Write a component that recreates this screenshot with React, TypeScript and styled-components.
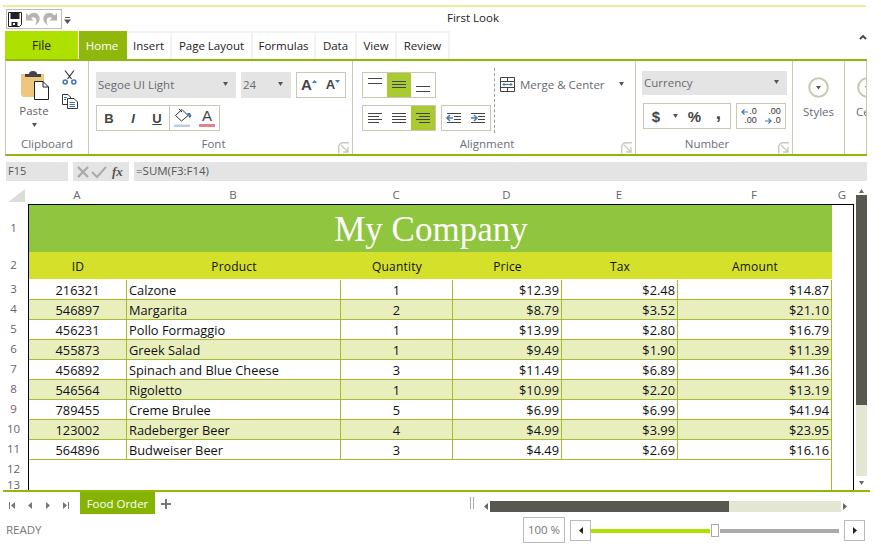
import React from "react";
import styled, { createGlobalStyle } from "styled-components";

const GlobalStyle = createGlobalStyle`
  html, body {
    margin: 0;
    padding: 0;
    background: #ffffff;
  }
  * {
    box-sizing: border-box;
  }
`;

const UI_FONT = `"Open Sans", "Noto Sans", sans-serif`;
const LINE = "#c8c8b4";
const COLS = "98px 214px 112px 109px 116px 154px";

const Frame = styled.div`
  width: 881px;
  height: 551px;
  overflow: hidden;
  padding-top: 5px;
  background: #fff;
  font-family: ${UI_FONT};
  font-size: 12px;
  color: #333;
`;

const TopLine = styled.div`
  height: 2px;
  width: 863px;
  margin-left: 3px;
  background: #e4f09a;
`;

const TitleRow = styled.div`
  height: 24px;
  display: flex;
  align-items: flex-start;
  padding: 2px 0 0 6px;
`;

const Qat = styled.div`
  width: 56px;
  height: 20px;
  border: 1px solid #bbb;
  display: flex;
  align-items: center;
  gap: 3px;
  padding-left: 1px;
`;

const QatMore = styled.svg`
  width: 7px;
  height: 7px;
  margin: 8px 0 0 2px;
`;

const Title = styled.div`
  flex: 1;
  text-align: center;
  padding: 1px 0 0 7px;
  margin-right: 13px;
  font-size: 11.5px;
  color: #222;
`;

const TabRow = styled.div`
  height: 28px;
  margin-left: 5px;
  width: 862px;
  display: flex;
  align-items: stretch;
`;

const FileTab = styled.div`
  width: 73px;
  margin-right: 1px;
  padding-top: 1px;
  background: #aee000;
  display: flex;
  align-items: center;
  justify-content: center;
  color: #222;
`;

const Tab = styled.div<{ $w: number; $active?: boolean }>`
  width: ${(p) => p.$w}px;
  display: flex;
  align-items: center;
  justify-content: center;
  padding-bottom: 1px;
  background: ${(p) => (p.$active ? "#90b80c" : "#fff")};
  color: ${(p) => (p.$active ? "#fff" : "#222")};
  border-right: 2px solid ${(p) => (p.$active ? "#90b80c" : "#f2f2f2")};
  border-top: 2px solid ${(p) => (p.$active ? "#90b80c" : "#f2f2f2")};
  font-size: 11.5px;
`;

const Collapse = styled.svg`
  width: 8px;
  height: 6px;
  margin: 3px 0 0 auto;
`;

const Ribbon = styled.div`
  height: 97px;
  width: 862px;
  margin-left: 5px;
  display: flex;
  border-top: 2px solid #90b80c;
  border-bottom: 2px solid #90b80c;
  border-left: 1px solid ${LINE};
`;

const Group = styled.div<{ $w: number }>`
  width: ${(p) => p.$w}px;
  flex: none;
  overflow: hidden;
  display: flex;
  flex-direction: column;
  border-right: 1px solid ${LINE};
`;

const GroupBody = styled.div<{ $pl?: number; $pt?: number }>`
  flex: 1;
  display: flex;
  padding: ${(p) => p.$pt ?? 11}px 0 0 ${(p) => p.$pl ?? 0}px;
`;

const GroupFooter = styled.div<{ $launcher?: boolean }>`
  position: relative;
  height: 21px;
  display: flex;
  align-items: flex-start;
  justify-content: center;
  padding-top: 3px;
  padding-right: ${(p) => (p.$launcher ? 14 : 0)}px;
  color: #6a6f73;
  font-size: 11.5px;
`;

const Launcher = styled.svg`
  position: absolute;
  right: 2px;
  bottom: 0;
  width: 12px;
  height: 12px;
`;

const PasteCol = styled.div`
  width: 56px;
  display: flex;
  flex-direction: column;
  align-items: center;
  color: #555;
`;

const PasteSvg = styled.svg`
  width: 30px;
  height: 30px;
  margin-left: 2px;
`;

const PasteLabel = styled.div`
  margin-top: 3px;
  font-size: 11.5px;
  color: #666;
`;

const SmallArrow = styled.svg`
  width: 5px;
  height: 4px;
  flex: none;
`;

const PasteArrow = styled(SmallArrow)`
  margin-top: 5px;
`;

const ClipSide = styled.div`
  display: flex;
  flex-direction: column;
  gap: 9px;
`;

const Column = styled.div<{ $gap?: number }>`
  display: flex;
  flex-direction: column;
  gap: ${(p) => p.$gap ?? 7}px;
`;

const Row = styled.div<{ $pl?: number }>`
  display: flex;
  gap: 5px;
  padding-left: ${(p) => p.$pl ?? 0}px;
`;

const Combo = styled.div<{ $w: number; $h?: number }>`
  width: ${(p) => p.$w}px;
  height: ${(p) => p.$h ?? 26}px;
  background: #e4e4e4;
  display: flex;
  align-items: center;
  justify-content: space-between;
  padding: 0 8px 2px 2px;
  color: #666b70;
  font-size: 11.5px;
`;

const ButtonBox = styled.div`
  height: 26px;
  border: 1px solid ${LINE};
  display: flex;
  flex: none;
`;

const Cell24 = styled.div<{ $active?: boolean; $w?: number }>`
  width: ${(p) => p.$w ?? 24}px;
  height: 24px;
  background: ${(p) => (p.$active ? "#a9cb2f" : "transparent")};
  display: flex;
  align-items: center;
  justify-content: center;
`;

const Letter = styled.span<{ $italic?: boolean; $under?: boolean }>`
  font-family: "Liberation Sans", sans-serif;
  font-weight: 700;
  font-size: 13px;
  color: #444;
  font-style: ${(p) => (p.$italic ? "italic" : "normal")};
  text-decoration: ${(p) => (p.$under ? "underline" : "none")};
`;

const JoinedBoxes = styled.div`
  display: flex;
  & > div + div {
    margin-left: -1px;
  }
`;

const DashedRule = styled.div`
  width: 0;
  height: 65px;
  margin: -4px 5px 0 3px;
  border-left: 1px dashed #999;
`;

const MergeButton = styled.div`
  display: flex;
  align-items: center;
  height: 20px;
  margin-top: 2px;
  gap: 5px;
  color: #666b70;
  white-space: nowrap;
  font-size: 11.5px;
`;

const MergeArrow = styled(SmallArrow)`
  margin-left: 9px;
`;

const BigDropdown = styled.div<{ $start?: boolean }>`
  display: flex;
  flex-direction: column;
  align-items: ${(p) => (p.$start ? "flex-start" : "center")};
  width: 100%;
  gap: 6px;
  color: #666b70;
  white-space: nowrap;
  font-size: 11.5px;
`;

const CircleIcon = styled.svg`
  width: 21px;
  height: 21px;
  flex: none;
`;

const CircleClip = styled(CircleIcon)`
  margin-left: 1px;
`;

const FormulaBar = styled.div`
  height: 19px;
  margin: 6px 0 0 6px;
  width: 861px;
  display: flex;
  gap: 5px;
`;

const NameBox = styled.div`
  width: 62px;
  background: #e4e4e4;
  padding-left: 2px;
  line-height: 17px;
  font-size: 11px;
  color: #555;
`;

const FormulaTools = styled.div`
  width: 56px;
  background: #e4e4e4;
  display: flex;
  align-items: center;
  padding-left: 3px;
  gap: 1px;
`;

const Fx = styled.span`
  font-family: "Liberation Serif", serif;
  font-style: italic;
  font-weight: 700;
  font-size: 13px;
  color: #555;
  margin-left: 4px;
`;

const FormulaInput = styled.div`
  flex: 1;
  background: #e4e4e4;
  padding-left: 2px;
  line-height: 17px;
  font-size: 11.5px;
  color: #555;
`;

const ColumnHeaders = styled.div`
  height: 18px;
  margin-top: 5px;
  display: flex;
  padding-left: 8px;
  color: #666;
  font-size: 11.5px;
`;

const CornerMark = styled.svg`
  width: 17px;
  height: 13px;
  margin: 3px 3px 0 0;
  flex: none;
`;

const ColLetters = styled.div`
  display: grid;
  grid-template-columns: ${COLS} 22px;
`;

const ColLetter = styled.div`
  text-align: center;
  line-height: 17px;
`;

const SheetArea = styled.div`
  height: 286px;
  display: flex;
`;

const RowNumbers = styled.div`
  width: 28px;
  flex: none;
  overflow: hidden;
  color: #6b5f6b;
  font-size: 11.5px;
`;

const RowNumber = styled.div<{ $h: number }>`
  height: ${(p) => p.$h}px;
  padding: 0 3px 1px 2px;
  display: flex;
  align-items: center;
  justify-content: center;
`;

const Sheet = styled.div`
  width: 826px;
  flex: none;
  overflow: hidden;
  border-left: 1px solid #000;
  border-top: 1px solid #000;
  border-right: 1px solid #000;
  font-size: 12.8px;
  color: #111;
`;

const Table = styled.div`
  width: 803px;
`;

const Banner = styled.div`
  height: 47px;
  background: #90c53f;
  color: #fff;
  font-family: "Liberation Serif", serif;
  font-size: 35px;
  line-height: 50px;
  text-align: center;
  padding-left: 1px;
`;

const HeaderRow = styled.div`
  height: 27px;
  display: grid;
  grid-template-columns: ${COLS};
  grid-template-rows: 27px;
  background: #d5e02a;
`;

const HeaderCell = styled.div`
  text-align: center;
  line-height: 29px;
  font-size: 12px;
  letter-spacing: 0.2px;
`;

const DataRows = styled.div`
  padding-top: 1px;
`;

const DataRow = styled.div<{ $alt: boolean }>`
  height: 20px;
  display: grid;
  grid-template-columns: ${COLS};
  grid-template-rows: 20px;
  background: ${(p) => (p.$alt ? "#e8efbd" : "#fff")};
`;

const DataCell = styled.div<{ $align: string }>`
  height: 20px;
  border-bottom: 1px solid #a9bb2b;
  border-right: 1px solid #a9bb2b;
  text-align: ${(p) => p.$align};
  padding: 0 2px;
  line-height: 21px;
  white-space: nowrap;
`;

const EmptyRow = styled.div`
  height: 20px;
  border-right: 1px solid #a9bb2b;
`;

const VScroll = styled.div`
  width: 11px;
  flex: none;
  margin-left: 2px;
  margin-top: -18px;
  display: flex;
  flex-direction: column;
  align-items: center;
`;

const ScrollArrowBox = styled.div<{ $h: number }>`
  height: ${(p) => p.$h}px;
  display: flex;
  align-items: center;
  justify-content: center;
`;

const VThumb = styled.div`
  width: 100%;
  height: 210px;
  background: #585850;
`;

const VTrack = styled.div`
  width: 100%;
  height: 71px;
  background: #e4e6d4;
`;

const BottomRule = styled.div`
  height: 2px;
  width: 867px;
  margin-left: 3px;
  background: #90b80c;
`;

const TabBar = styled.div`
  height: 24px;
  display: flex;
  align-items: flex-start;
`;

const NavGroup = styled.div`
  width: 80px;
  display: flex;
  align-items: center;
  height: 22px;
  margin-top: 2px;
  padding-left: 9px;
  gap: 12px;
`;

const NavIcon = styled.svg`
  width: 6px;
  height: 7px;
`;

const SheetTab = styled.div`
  width: 75px;
  height: 22px;
  background: #84b400;
  color: #fff;
  display: flex;
  align-items: center;
  justify-content: center;
  font-size: 11.5px;
`;

const AddSheet = styled.svg`
  width: 10px;
  height: 10px;
  margin: 7px 0 0 6px;
`;

const Splitter = styled.div`
  width: 4px;
  height: 12px;
  margin: 5px 0 0 299px;
  border-left: 1px solid #aaa;
  border-right: 1px solid #aaa;
`;

const HScroll = styled.div`
  display: flex;
  align-items: center;
  height: 11px;
  margin: 9px 0 0 8px;
`;

const HThumb = styled.div`
  width: 239px;
  height: 11px;
  background: #585850;
`;

const HTrack = styled.div`
  width: 112px;
  height: 11px;
  background: #e4e6d4;
`;

const ScrollSideArrow = styled.svg`
  width: 4px;
  height: 7px;
  margin: 0 2px;
`;

const StatusBar = styled.div`
  height: 35px;
  display: flex;
  align-items: flex-start;
`;

const Ready = styled.div`
  width: 523px;
  padding: 6px 0 0 6px;
  font-size: 11.5px;
  color: #777;
`;

const ZoomValue = styled.div`
  width: 42px;
  height: 26px;
  margin: 1px 5px 0 0;
  border: 1px solid #bbb;
  text-align: center;
  line-height: 24px;
  font-size: 11.5px;
  color: #777;
`;

const ZoomButton = styled.div`
  width: 21px;
  height: 21px;
  margin-top: 4px;
  border: 1px solid #bbb;
  display: flex;
  align-items: center;
  justify-content: center;
`;

const ZoomSlider = styled.div`
  display: flex;
  align-items: center;
  height: 21px;
  width: 248px;
  margin: 4px 5px 0 0;
`;

const ZoomFill = styled.div`
  width: 119px;
  height: 4px;
  background: #aee000;
`;

const ZoomThumb = styled.div`
  width: 8px;
  height: 13px;
  margin: 0 1px;
  background: #fff;
  border: 1px solid #aaa;
`;

const ZoomRest = styled.div`
  width: 119px;
  height: 4px;
  background: #aaa;
`;

const Arrow = ({ dir = "down", color = "#555" }: { dir?: "down" | "up"; color?: string }) => (
  <SmallArrow viewBox="0 0 5 4">
    <path d={dir === "down" ? "M0 0H5L2.5 4Z" : "M0 4H5L2.5 0Z"} fill={color} />
  </SmallArrow>
);

const Side = ({ left, color = "#666" }: { left?: boolean; color?: string }) => (
  <ScrollSideArrow viewBox="0 0 4 7">
    <path d={left ? "M4 0V7L0 3.5Z" : "M0 0V7L4 3.5Z"} fill={color} />
  </ScrollSideArrow>
);

const LauncherIcon = () => (
  <Launcher viewBox="0 0 12 12" fill="none" stroke="#c9cbbd" strokeWidth="1.4">
    <path d="M.7 11.5V5A4.3 4.3 0 0 1 5 .7H11" />
    <path d="M3 3L10 10M10 5V10H5" />
  </Launcher>
);

const Lines = ({ ys, short }: { ys: number[]; short?: "l" | "r" }) => (
  <svg width="24" height="24" viewBox="0 0 24 24" stroke="#444" strokeWidth="1">
    {ys.map((y, i) => {
      const isShort = short && i % 2 === 1;
      const a = isShort && short === "r" ? 8 : 5;
      const b = isShort && short === "l" ? 16 : 19;
      return <line key={y} x1={a} x2={b} y1={y + 0.5} y2={y + 0.5} />;
    })}
  </svg>
);

const Indent = ({ out }: { out?: boolean }) => (
  <svg width="24" height="24" viewBox="0 0 24 24" fill="none">
    <path d="M5 7.5H19M12 10.5H19M12 13.5H19M5 16.5H19" stroke="#444" />
    <path
      d={out ? "M11 12H5M8 9L5 12L8 15" : "M5 12H11M8 9L11 12L8 15"}
      stroke="#4a7fb5"
      strokeWidth="1.6"
    />
  </svg>
);

const SaveIcon = () => (
  <svg width="14" height="15" viewBox="0 0 14 15" fill="none">
    <path d="M.5.5H13.5V12.5L11.5 14.5H.5Z" fill="#fff" stroke="#222" />
    <path d="M2.5 1H11.5V7H2.5Z" fill="#222" />
    <path d="M3.5 10H9.5V14H3.5Z" fill="#222" />
    <path d="M5 11H7V13H5Z" fill="#fff" />
  </svg>
);

const UndoIcon = ({ flip }: { flip?: boolean }) => (
  <svg width="15" height="14" viewBox="0 0 15 14">
    <g transform={flip ? "translate(15 0) scale(-1 1)" : undefined}>
      <path d="M1 1V8.5H8.5L6 6C8 4.6 10.6 5.4 11.2 7.6C11.7 9.4 11.2 11.4 10 13.5C13.4 11.8 15.2 8.6 14.6 5.4C13.6 .6 7.4 -1 3.6 3.4Z" fill="#b4b4b4" />
    </g>
  </svg>
);

const PasteIcon = () => (
  <PasteSvg viewBox="0 0 30 30">
    <path d="M1 4H24V27H3L1 25Z" fill="#eec67f" />
    <path d="M5 4H21V7H5Z" fill="#444" />
    <path d="M9 4A4 3 0 0 1 17 4Z" fill="#444" />
    <path d="M14.5 11.5H23L28.5 17V29.5H14.5Z" fill="#fff" stroke="#222" />
    <path d="M23 11.5V17H28.5" fill="none" stroke="#222" />
  </PasteSvg>
);

const ScissorsIcon = () => (
  <svg width="15" height="15" viewBox="0 0 15 15" fill="none">
    <path d="M3 .5L9.5 9M12 .5L5.5 9" stroke="#333" strokeWidth="1.2" />
    <circle cx="3.2" cy="12" r="2" stroke="#3f78b0" strokeWidth="1.6" />
    <circle cx="11.8" cy="12" r="2" stroke="#3f78b0" strokeWidth="1.6" />
  </svg>
);

const CopyIcon = () => (
  <svg width="16" height="15" viewBox="0 0 16 15" fill="none" stroke="#333">
    <path d="M.5.5H6L8.5 3V10.5H.5Z" fill="#fff" />
    <path d="M5.5 4.5H12L15.5 8V14.5H5.5Z" fill="#fff" />
    <path d="M7.5 8.5H13M7.5 10.5H13M7.5 12.5H13" stroke="#3f78b0" />
    <path d="M2 3.5H5M2 5.5H4" stroke="#3f78b0" />
  </svg>
);

const FillIcon = () => (
  <svg width="18" height="20" viewBox="0 0 18 20" fill="none">
    <path d="M8 1.5L14 7.5L7.5 13L1.5 7.5Z" fill="#fff" stroke="#333" />
    <path d="M5 1L8 4" stroke="#333" />
    <path d="M13 5H16L17.5 8L15.5 10.5L14.5 8Z" fill="#3f78b0" />
    <path d="M0 16.5H16V19H0Z" fill="#b9d0e4" />
  </svg>
);

const FontColorWrap = styled.div`
  display: flex;
  flex-direction: column;
  align-items: center;
`;

const FontColorA = styled.span`
  font-family: "Liberation Sans", sans-serif;
  font-size: 15px;
  line-height: 14px;
  color: #444;
`;

const FontColorBar = styled.div`
  width: 16px;
  height: 3px;
  margin-top: 1px;
  background: #e38191;
`;

const SizeA = styled.span`
  font-family: "Liberation Sans", sans-serif;
  font-weight: 700;
  color: #444;
  line-height: 14px;
`;

const GrowA = styled(SizeA)`
  font-size: 15px;
`;

const ShrinkA = styled(SizeA)`
  font-size: 13px;
`;

const SizeMark = styled.svg`
  width: 5px;
  height: 3px;
  margin: -8px 0 0 0;
`;

const MergeIcon = () => (
  <svg width="15" height="15" viewBox="0 0 15 15" fill="none" stroke="#444">
    <path d="M.5.5H14.5V14.5H.5Z" />
    <path d="M.5 4.5H14.5M.5 10.5H14.5M7.5.5V4.5M7.5 10.5V14.5" />
    <path d="M3 7.5H12M4.5 6L3 7.5L4.5 9M10.5 6L12 7.5L10.5 9" stroke="#3f78b0" />
  </svg>
);

const NumberGlyph = styled(Letter)`
  font-size: 15px;
`;

const CommaGlyph = styled(Letter)`
  font-size: 19px;
  line-height: 12px;
  margin-top: -6px;
`;

const DecimalWrap = styled.div`
  display: flex;
  flex-direction: column;
  align-items: flex-end;
`;

const DecimalLine = styled.span`
  display: flex;
  align-items: center;
  gap: 1px;
  height: 9px;
  font-family: "Liberation Sans", sans-serif;
  font-size: 9px;
  line-height: 9px;
  color: #333;
`;

const DecimalArrow = styled.svg`
  width: 7px;
  height: 6px;
`;

const DecimalIcon = ({ more }: { more?: boolean }) => (
  <DecimalWrap>
    <DecimalLine>
      {!more && (
        <DecimalArrow viewBox="0 0 7 6" fill="none">
          <path d="M7 3H1M3.5 .5L1 3L3.5 5.5" stroke="#3f78b0" strokeWidth="1.2" />
        </DecimalArrow>
      )}
      {more ? ".00" : ".0"}
    </DecimalLine>
    <DecimalLine>
      {more && (
        <DecimalArrow viewBox="0 0 7 6" fill="none">
          <path d="M0 3H6M3.5 .5L6 3L3.5 5.5" stroke="#3f78b0" strokeWidth="1.2" />
        </DecimalArrow>
      )}
      {more ? ".0" : ".00"}
    </DecimalLine>
  </DecimalWrap>
);

const circlePaths = (
  <>
    <circle cx="10.5" cy="10.5" r="9.3" stroke="#c8c8b4" strokeWidth="2" />
    <path d="M8 9H13L10.5 12.5Z" fill="#555" />
  </>
);

const Nav = ({ d }: { d: string }) => (
  <NavIcon viewBox="0 0 6 7">
    <path d={d} fill="#777" />
  </NavIcon>
);

const columnNames = ["A", "B", "C", "D", "E", "F", "G"];
const headers = ["ID", "Product", "Quantity", "Price", "Tax", "Amount"];
const rows = [
  ["216321", "Calzone", "1", "$12.39", "$2.48", "$14.87"],
  ["546897", "Margarita", "2", "$8.79", "$3.52", "$21.10"],
  ["456231", "Pollo Formaggio", "1", "$13.99", "$2.80", "$16.79"],
  ["455873", "Greek Salad", "1", "$9.49", "$1.90", "$11.39"],
  ["456892", "Spinach and Blue Cheese", "3", "$11.49", "$6.89", "$41.36"],
  ["546564", "Rigoletto", "1", "$10.99", "$2.20", "$13.19"],
  ["789455", "Creme Brulee", "5", "$6.99", "$6.99", "$41.94"],
  ["123002", "Radeberger Beer", "4", "$4.99", "$3.99", "$23.95"],
  ["564896", "Budweiser Beer", "3", "$4.49", "$2.69", "$16.16"],
];
const alignments = ["center", "left", "center", "right", "right", "right"];

export default function App() {
  return (
    <Frame>
      <GlobalStyle />
      <TopLine />
      <TitleRow>
        <Qat>
          <SaveIcon />
          <UndoIcon />
          <UndoIcon flip />
        </Qat>
        <QatMore viewBox="0 0 7 7">
          <path d="M1 0H6V1H1ZM0 2.5H7L3.5 7Z" fill="#555" />
        </QatMore>
        <Title>First Look</Title>
      </TitleRow>
      <TabRow>
        <FileTab>File</FileTab>
        <Tab $w={48} $active>Home</Tab>
        <Tab $w={45}>Insert</Tab>
        <Tab $w={81}>Page Layout</Tab>
        <Tab $w={63}>Formulas</Tab>
        <Tab $w={41}>Data</Tab>
        <Tab $w={40}>View</Tab>
        <Tab $w={53}>Review</Tab>
        <Collapse viewBox="0 0 8 6" fill="none">
          <path d="M1 5L4 2L7 5" stroke="#444" strokeWidth="1.8" />
        </Collapse>
      </TabRow>
      <Ribbon>
        <Group $w={83}>
          <GroupBody $pt={9}>
            <PasteCol>
              <PasteIcon />
              <PasteLabel>Paste</PasteLabel>
              <PasteArrow viewBox="0 0 5 4">
                <path d="M0 0H5L2.5 4Z" fill="#555" />
              </PasteArrow>
            </PasteCol>
            <ClipSide>
              <ScissorsIcon />
              <CopyIcon />
            </ClipSide>
          </GroupBody>
          <GroupFooter>Clipboard</GroupFooter>
        </Group>
        <Group $w={264}>
          <GroupBody $pl={7}>
            <Column>
              <Row>
                <Combo $w={140}>
                  Segoe UI Light
                  <Arrow />
                </Combo>
                <Combo $w={50}>
                  24
                  <Arrow />
                </Combo>
                <ButtonBox>
                  <Cell24>
                    <GrowA>A</GrowA>
                    <SizeMark viewBox="0 0 5 3">
                      <path d="M0 3H5L2.5 0Z" fill="#3f78b0" />
                    </SizeMark>
                  </Cell24>
                  <Cell24>
                    <ShrinkA>A</ShrinkA>
                    <SizeMark viewBox="0 0 5 3">
                      <path d="M0 0H5L2.5 3Z" fill="#3f78b0" />
                    </SizeMark>
                  </Cell24>
                </ButtonBox>
              </Row>
              <JoinedBoxes>
                <ButtonBox>
                  <Cell24><Letter>B</Letter></Cell24>
                  <Cell24><Letter $italic>I</Letter></Cell24>
                  <Cell24><Letter $under>U</Letter></Cell24>
                </ButtonBox>
                <ButtonBox>
                  <Cell24 $w={25}><FillIcon /></Cell24>
                  <Cell24 $w={24}>
                    <FontColorWrap>
                      <FontColorA>A</FontColorA>
                      <FontColorBar />
                    </FontColorWrap>
                  </Cell24>
                </ButtonBox>
              </JoinedBoxes>
            </Column>
          </GroupBody>
          <GroupFooter $launcher>
            Font
            <LauncherIcon />
          </GroupFooter>
        </Group>
        <Group $w={283}>
          <GroupBody $pl={9}>
            <Column>
              <Row>
                <ButtonBox>
                  <Cell24><Lines ys={[5, 10]} /></Cell24>
                  <Cell24 $active><Lines ys={[8, 11, 14]} /></Cell24>
                  <Cell24><Lines ys={[13, 18]} /></Cell24>
                </ButtonBox>
              </Row>
              <Row>
                <ButtonBox>
                  <Cell24><Lines ys={[7, 10, 13, 16]} short="l" /></Cell24>
                  <Cell24><Lines ys={[7, 10, 13, 16]} /></Cell24>
                  <Cell24 $active><Lines ys={[7, 10, 13, 16]} short="r" /></Cell24>
                </ButtonBox>
                <ButtonBox>
                  <Cell24><Indent out /></Cell24>
                  <Cell24><Indent /></Cell24>
                </ButtonBox>
              </Row>
            </Column>
            <DashedRule />
            <MergeButton>
              <MergeIcon />
              Merge &amp; Center
              <MergeArrow viewBox="0 0 5 4">
                <path d="M0 0H5L2.5 4Z" fill="#555" />
              </MergeArrow>
            </MergeButton>
          </GroupBody>
          <GroupFooter $launcher>
            Alignment
            <LauncherIcon />
          </GroupFooter>
        </Group>
        <Group $w={157}>
          <GroupBody $pl={6} $pt={10}>
            <Column $gap={8}>
              <Combo $w={145} $h={24}>
                Currency
                <Arrow />
              </Combo>
              <Row $pl={1}>
                <ButtonBox>
                  <Cell24 $w={24}><NumberGlyph>$</NumberGlyph></Cell24>
                  <Cell24 $w={14}><Arrow /></Cell24>
                  <Cell24 $w={25}><NumberGlyph>%</NumberGlyph></Cell24>
                  <Cell24 $w={23}><CommaGlyph>,</CommaGlyph></Cell24>
                </ButtonBox>
                <ButtonBox>
                  <Cell24><DecimalIcon /></Cell24>
                  <Cell24><DecimalIcon more /></Cell24>
                </ButtonBox>
              </Row>
            </Column>
          </GroupBody>
          <GroupFooter $launcher>
            Number
            <LauncherIcon />
          </GroupFooter>
        </Group>
        <Group $w={52}>
          <GroupBody $pt={16}>
            <BigDropdown>
              <CircleIcon viewBox="0 0 21 21" fill="none">{circlePaths}</CircleIcon>
              Styles
            </BigDropdown>
          </GroupBody>
        </Group>
        <Group $w={22}>
          <GroupBody $pt={16} $pl={11}>
            <BigDropdown $start>
              <CircleClip viewBox="0 0 21 21" fill="none">{circlePaths}</CircleClip>
              Cell
            </BigDropdown>
          </GroupBody>
        </Group>
      </Ribbon>
      <FormulaBar>
        <NameBox>F15</NameBox>
        <FormulaTools>
          <svg width="14" height="14" viewBox="0 0 14 14">
            <path d="M2 2L12 12M12 2L2 12" stroke="#aaa" strokeWidth="2.4" />
          </svg>
          <svg width="16" height="14" viewBox="0 0 16 14" fill="none">
            <path d="M1 7L6 12L15 2" stroke="#aaa" strokeWidth="2" />
          </svg>
          <Fx>fx</Fx>
        </FormulaTools>
        <FormulaInput>=SUM(F3:F14)</FormulaInput>
      </FormulaBar>
      <ColumnHeaders>
        <CornerMark viewBox="0 0 17 13">
          <path d="M0 13L17 0V13Z" fill="#dcdcdc" />
        </CornerMark>
        <ColLetters>
          {columnNames.map((c) => (
            <ColLetter key={c}>{c}</ColLetter>
          ))}
        </ColLetters>
      </ColumnHeaders>
      <SheetArea>
        <RowNumbers>
          <RowNumber $h={47}>1</RowNumber>
          <RowNumber $h={28}>2</RowNumber>
          {[3, 4, 5, 6, 7, 8, 9, 10, 11, 12].map((n) => (
            <RowNumber key={n} $h={20}>{n}</RowNumber>
          ))}
          <RowNumber $h={11}>13</RowNumber>
        </RowNumbers>
        <Sheet>
          <Table>
            <Banner>My Company</Banner>
            <HeaderRow>
              {headers.map((h) => (
                <HeaderCell key={h}>{h}</HeaderCell>
              ))}
            </HeaderRow>
            <DataRows>
              {rows.map((row, r) => (
                <DataRow key={row[0]} $alt={r % 2 === 1}>
                  {row.map((value, c) => (
                    <DataCell key={c} $align={alignments[c]}>
                      {value}
                    </DataCell>
                  ))}
                </DataRow>
              ))}
              <EmptyRow />
              <EmptyRow />
            </DataRows>
          </Table>
        </Sheet>
        <VScroll>
          <ScrollArrowBox $h={9}>
            <Arrow dir="up" color="#666" />
          </ScrollArrowBox>
          <VThumb />
          <VTrack />
          <ScrollArrowBox $h={14}>
            <Arrow color="#666" />
          </ScrollArrowBox>
        </VScroll>
      </SheetArea>
      <BottomRule />
      <TabBar>
        <NavGroup>
          <Nav d="M0 0H1V7H0ZM6 0V7L2 3.5Z" />
          <Nav d="M5 0V7L1 3.5Z" />
          <Nav d="M1 0V7L5 3.5Z" />
          <Nav d="M0 0V7L4 3.5ZM5 0H6V7H5Z" />
        </NavGroup>
        <SheetTab>Food Order</SheetTab>
        <AddSheet viewBox="0 0 10 10">
          <path d="M4 0H6V4H10V6H6V10H4V6H0V4H4Z" fill="#777" />
        </AddSheet>
        <Splitter />
        <HScroll>
          <Side left />
          <HThumb />
          <HTrack />
          <Side />
        </HScroll>
      </TabBar>
      <StatusBar>
        <Ready>READY</Ready>
        <ZoomValue>100 %</ZoomValue>
        <ZoomButton>
          <Side left color="#222" />
        </ZoomButton>
        <ZoomSlider>
          <ZoomFill />
          <ZoomThumb />
          <ZoomRest />
        </ZoomSlider>
        <ZoomButton>
          <Side color="#222" />
        </ZoomButton>
      </StatusBar>
    </Frame>
  );
}
